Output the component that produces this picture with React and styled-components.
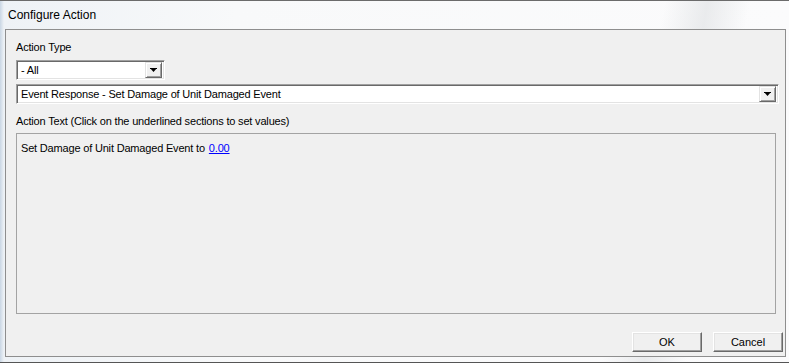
import React from 'react';
import styled, { createGlobalStyle } from 'styled-components';

const GlobalStyle = createGlobalStyle`
    html, body {
        margin: 0;
        padding: 0;
        background: #ffffff;
    }
    body {
        font-family: "Liberation Sans", Arial, sans-serif;
        font-size: 11px;
        color: #000;
    }
`

const Window = styled.div`
    width: 789px;
    height: 363px;
    box-sizing: border-box;
    display: flex;
    flex-direction: column;
    border-top: 1px solid #6b6b6b;
    border-bottom: 1px solid #555;
    background:
        linear-gradient(100deg, rgba(255,255,255,0) 78%, rgba(226,228,230,0.7) 83%, rgba(255,255,255,0) 88%),
        linear-gradient(to right, #c9d6e4 0px, #eef2f6 4px, #f8f9fa 30%, #fbfbfc 100%);
`

const TitleBar = styled.div`
    height: 28px;
    flex-shrink: 0;
    display: flex;
    align-items: center;
    padding-left: 8px;
    font-size: 12px;
    color: #000;
`

const Client = styled.div`
    flex: 1;
    margin: 0 3px 5px 5px;
    border: 1px solid #8e8e8e;
    background: #f0f0f0;
    display: flex;
    flex-direction: column;
    padding: 10px 0 0 10px;
    letter-spacing: -0.18px;
`

const Label = styled.div`
    height: 13px;
    line-height: 13px;
    padding-top: 1px;
    margin-bottom: ${props => props.gap}px;
`

const Combo = styled.div`
    width: ${props => props.width}px;
    height: 20px;
    box-sizing: border-box;
    display: flex;
    align-items: center;
    justify-content: space-between;
    background: #fff;
    border: 1px solid;
    border-color: #a0a0a0 #fff #fff #a0a0a0;
    box-shadow: inset 1px 1px 0 #696969, inset -1px -1px 0 #e3e3e3;
    padding: 0 2px 0 4px;
    margin-bottom: ${props => props.gap}px;
`

const DropButton = styled.div`
    width: 17px;
    height: 16px;
    box-sizing: border-box;
    display: flex;
    align-items: center;
    justify-content: center;
    background: #f0f0f0;
    border: 1px solid;
    border-color: #e3e3e3 #696969 #696969 #e3e3e3;
    box-shadow: inset 1px 1px 0 #fff, inset -1px -1px 0 #a0a0a0;
`

const TextPanel = styled.div`
    width: 760px;
    height: 181px;
    box-sizing: border-box;
    border: 1px solid #a3a3a3;
    padding: 8px 0 0 4px;
    line-height: 13px;
`

const ValueLink = styled.span`
    color: #0000ff;
    text-decoration: underline;
    margin-left: 4px;
`

const ButtonRow = styled.div`
    display: flex;
    justify-content: flex-end;
    gap: 11px;
    margin-top: 18px;
    padding-right: 2px;
`

const Button = styled.div`
    width: 70px;
    height: 20px;
    box-sizing: border-box;
    display: flex;
    align-items: center;
    justify-content: center;
    background: #f0f0f0;
    border: 1px solid;
    border-color: #fff #696969 #696969 #fff;
    box-shadow: inset -1px -1px 0 #a0a0a0, inset 1px 1px 0 #e3e3e3;
    font-size: 11px;
    letter-spacing: 0;
`

const Arrow = () => (
    <svg width="7" height="5" viewBox="0 0 7 5">
        <polygon points="0,0 7,0 3.5,4" fill="#000" />
        <rect x="0" y="0" width="7" height="1" fill="#000" />
    </svg>
)

const App = () => {
    return (
        <>
            <GlobalStyle />
            <Window>
                <TitleBar>Configure Action</TitleBar>
                <Client>
                    <Label gap={6}>Action Type</Label>
                    <Combo width={149} gap={4}>
                        <span>- All</span>
                        <DropButton><Arrow /></DropButton>
                    </Combo>
                    <Combo width={763} gap={10}>
                        <span>Event Response - Set Damage of Unit Damaged Event</span>
                        <DropButton><Arrow /></DropButton>
                    </Combo>
                    <Label gap={5}>Action Text (Click on the underlined sections to set values)</Label>
                    <TextPanel>
                        Set Damage of Unit Damaged Event to<ValueLink>0.00</ValueLink>
                    </TextPanel>
                    <ButtonRow>
                        <Button>OK</Button>
                        <Button>Cancel</Button>
                    </ButtonRow>
                </Client>
            </Window>
        </>
    );
}

export default App;
